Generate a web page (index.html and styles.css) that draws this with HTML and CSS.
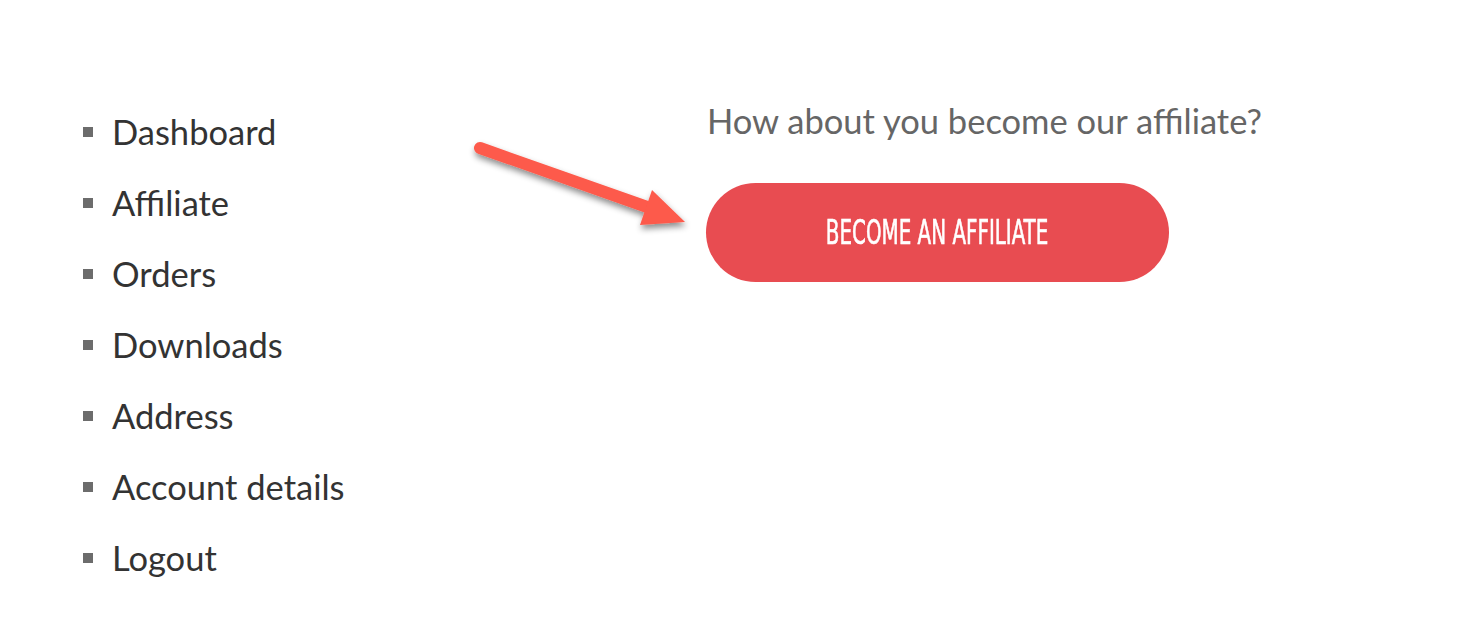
FILE: index.html
```html
<!DOCTYPE html>
<html>
<head>
<meta charset="utf-8">
<link rel="stylesheet" href="styles.css">
</head>
<body>
<div class="page">
  <nav class="account-nav">
    <ul>
      <li><a href="#">Dashboard</a></li>
      <li><a href="#">Affiliate</a></li>
      <li><a href="#">Orders</a></li>
      <li><a href="#">Downloads</a></li>
      <li><a href="#">Address</a></li>
      <li><a href="#">Account details</a></li>
      <li><a href="#">Logout</a></li>
    </ul>
  </nav>
  <main class="content">
    <p class="prompt">How about you become our affiliate?</p>
    <a class="btn" href="#"><span class="btn-label">BECOME AN AFFILIATE</span></a>
  </main>
  <svg class="arrow" width="260" height="120" viewBox="0 0 260 120">
    <defs>
      <filter id="sh" x="-20%" y="-40%" width="140%" height="180%">
        <feDropShadow dx="1" dy="4" stdDeviation="3" flood-color="#000" flood-opacity="0.45"/>
      </filter>
    </defs>
    <g filter="url(#sh)">
      <line x1="20" y1="18" x2="190" y2="78" stroke="#fd5a4b" stroke-width="12" stroke-linecap="round"/>
      <polygon points="192,60 225,92 180,95" fill="#fd5a4b"/>
    </g>
  </svg>
</div>
</body>
</html>
```
FILE: styles.css
```css
html, body {
  margin: 0;
  padding: 0;
  background: #fff;
}
.page {
  position: relative;
  display: flex;
  width: 1476px;
  height: 636px;
  font-family: Lato, "Open Sans", sans-serif;
}
.account-nav {
  width: 706px;
  padding-top: 96px;
  box-sizing: border-box;
}
.account-nav ul {
  list-style: none;
  margin: 0;
  padding: 0 0 0 83px;
}
.account-nav li {
  display: flex;
  align-items: center;
  height: 71px;
  font-size: 34.5px;
  color: #333;
}
.account-nav li::before {
  content: "";
  width: 10px;
  height: 10px;
  background: #6c6c6c;
  margin-right: 19px;
  flex: none;
}
.account-nav a {
  color: #333;
  text-decoration: none;
}
.content {
  padding-top: 97px;
}
.prompt {
  margin: 0 0 38px 1px;
  font-size: 34.5px;
  line-height: 48px;
  color: #666;
}
.btn {
  display: flex;
  align-items: center;
  justify-content: center;
  width: 463px;
  height: 99px;
  border-radius: 50px;
  background: #e84c51;
  text-decoration: none;
}
.btn-label {
  font-family: "DejaVu Sans Condensed", "DejaVu Sans", sans-serif;
  font-size: 33px;
  color: #fff;
  -webkit-text-stroke: 0.6px #fff;
  transform: scaleX(0.67);
  white-space: nowrap;
}
.arrow {
  position: absolute;
  left: 460px;
  top: 130px;
  overflow: visible;
}
```
